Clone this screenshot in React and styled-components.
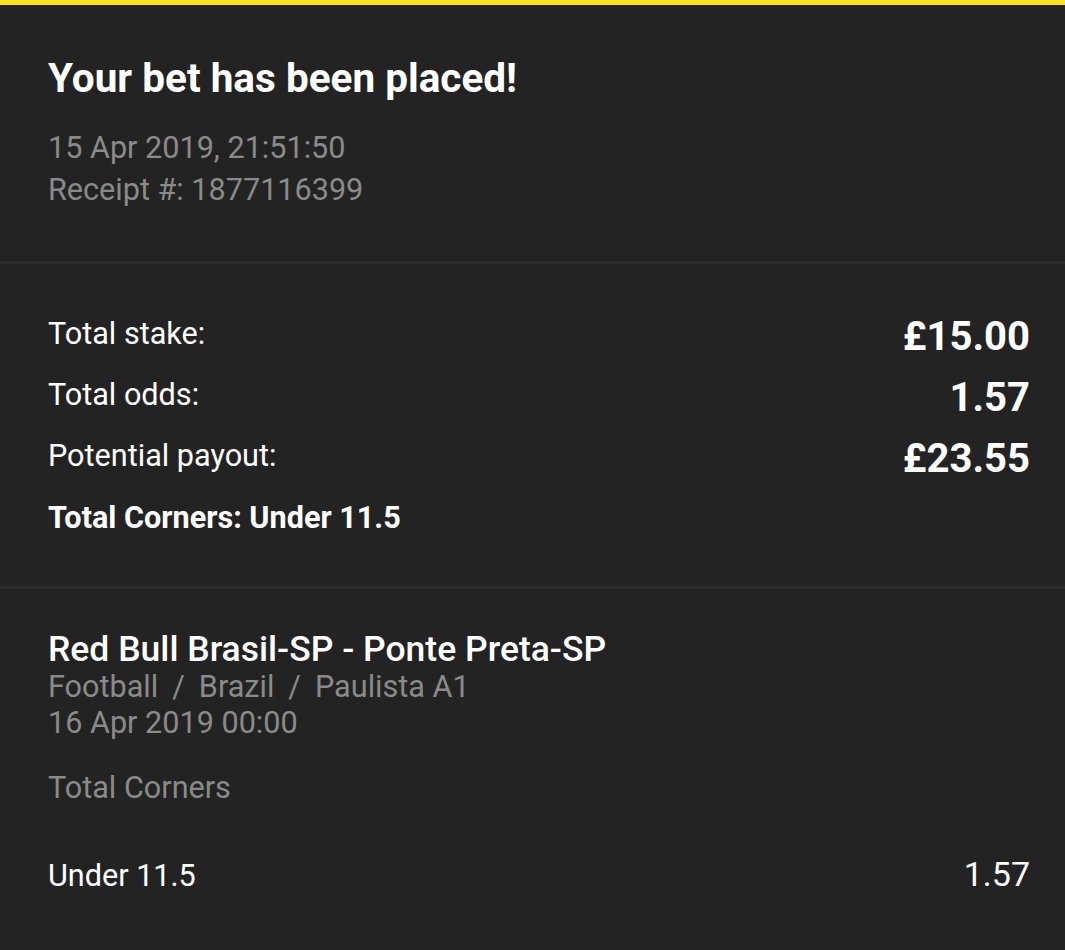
import React from 'react';
import styled, { createGlobalStyle } from 'styled-components';

const GlobalStyle = createGlobalStyle`
  html, body {
    margin: 0;
    padding: 0;
    background: #232323;
  }
  body {
    font-family: Roboto, "Noto Sans", "Liberation Sans", sans-serif;
    color: #ffffff;
  }
`;

const Page = styled.div`
  width: 1065px;
  min-height: 950px;
  background: #232323;
  border-top: 5px solid #ffe01e;
`;

const Section = styled.section`
  padding: ${(p) => p.pad || '0 35px 0 48px'};
  & + & {
    border-top: 3px solid #2b2b2b;
  }
`;

const Title = styled.h1`
  margin: 0 0 25px;
  font-size: 40.5px;
  line-height: 48px;
  font-weight: 700;
`;

const Muted = styled.div`
  font-size: 30.6px;
  line-height: ${(p) => p.lh || '42px'};
  color: #8a8a8a;
  margin-top: ${(p) => p.mt || '0'};
`;

const Row = styled.div`
  display: flex;
  justify-content: space-between;
  align-items: center;
  height: 61px;
`;

const Label = styled.span`
  font-size: 30.6px;
`;

const Amount = styled.span`
  font-size: 40px;
  font-weight: 700;
  margin-top: 6px;
`;

const Summary = styled.div`
  font-size: 30.6px;
  font-weight: 700;
  line-height: 64px;
`;

const Match = styled.div`
  font-size: 35.5px;
  font-weight: 500;
  line-height: 39px;
`;

const Sep = styled.span`
  margin: 0 14px;
`;

const Selection = styled.div`
  display: flex;
  justify-content: space-between;
  align-items: baseline;
  margin-top: 50px;
  line-height: 36px;
`;

const Odds = styled.span`
  font-size: 34px;
`;

const totals = [
  { label: 'Total stake:', value: '£15.00' },
  { label: 'Total odds:', value: '1.57' },
  { label: 'Potential payout:', value: '£23.55' },
];

export default function App() {
  return (
    <>
      <GlobalStyle />
      <Page>
        <Section pad="49px 35px 50px 48px">
          <Title>Your bet has been placed!</Title>
          <Muted>15 Apr 2019, 21:51:50</Muted>
          <Muted>Receipt #: 1877116399</Muted>
        </Section>

        <Section pad="39px 35px 36px 48px">
          {totals.map((t) => (
            <Row key={t.label}>
              <Label>{t.label}</Label>
              <Amount>{t.value}</Amount>
            </Row>
          ))}
          <Summary>Total Corners: Under 11.5</Summary>
        </Section>

        <Section pad="41px 35px 40px 48px">
          <Match>Red Bull Brasil-SP - Ponte Preta-SP</Match>
          <Muted lh="36px">
            Football<Sep>/</Sep>Brazil<Sep>/</Sep>Paulista A1
          </Muted>
          <Muted lh="36px">16 Apr 2019 00:00</Muted>
          <Muted lh="36px" mt="29px">Total Corners</Muted>
          <Selection>
            <Label>Under 11.5</Label>
            <Odds>1.57</Odds>
          </Selection>
        </Section>
      </Page>
    </>
  );
}
